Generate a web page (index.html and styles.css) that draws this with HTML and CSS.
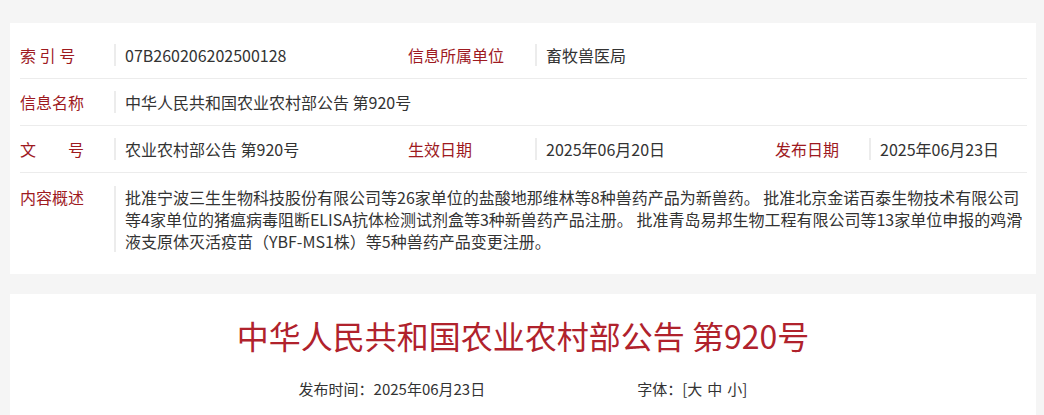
FILE: index.html
```html
<!DOCTYPE html>
<html lang="zh-CN">
<head>
    <meta charset="UTF-8">
    <meta name="viewport" content="width=device-width, initial-scale=1.0">
    <title>中华人民共和国农业农村部公告 第920号</title>
    <link rel="stylesheet" href="styles.css">
</head>
<body>
    <div class="info-card">
        <div class="info-row">
            <div class="label">索 引 号</div>
            <div class="value">07B260206202500128</div>
            <div class="label">信息所属单位</div>
            <div class="value span-rest">畜牧兽医局</div>
        </div>
        <div class="info-row">
            <div class="label">信息名称</div>
            <div class="value span-all">中华人民共和国农业农村部公告 第920号</div>
        </div>
        <div class="info-row">
            <div class="label">文　　号</div>
            <div class="value">农业农村部公告 第920号</div>
            <div class="label">生效日期</div>
            <div class="value">2025年06月20日</div>
            <div class="label">发布日期</div>
            <div class="value">2025年06月23日</div>
        </div>
        <div class="info-row summary">
            <div class="label">内容概述</div>
            <div class="value span-all">批准宁波三生生物科技股份有限公司等26家单位的盐酸地那维林等8种兽药产品为新兽药。 批准北京金诺百泰生物技术有限公司等4家单位的猪瘟病毒阻断ELISA抗体检测试剂盒等3种新兽药产品注册。 批准青岛易邦生物工程有限公司等13家单位申报的鸡滑液支原体灭活疫苗（YBF-MS1株）等5种兽药产品变更注册。</div>
        </div>
    </div>

    <div class="article-card">
        <h1 class="article-title">中华人民共和国农业农村部公告 第920号</h1>
        <div class="article-meta">
            <span>发布时间：2025年06月23日</span>
            <span class="font-size">字体：[<a href="#">大</a><a href="#">中</a><a href="#">小</a>]</span>
        </div>
    </div>
</body>
</html>
```

FILE: styles.css
```css
body {
    font-family: 'Noto Sans CJK SC', 'Noto Sans', sans-serif;
    background-color: #f5f5f5;
    color: #333333;
    margin: 0;
    padding: 23px 8px 0 10px;
}

.info-card {
    background-color: #ffffff;
    padding: 9px 9px 0 10px;
}

.info-row {
    display: grid;
    grid-template-columns: 94px 294px 127px 240px 94px 1fr;
    padding: 12px 0;
    border-bottom: 1px solid #ececec;
    font-size: 16px;
    line-height: 22px;
}

.info-row.summary {
    border-bottom: none;
    padding: 13px 0 22px;
}

.label {
    color: #9e1a1f;
    white-space: pre;
}

.value {
    border-left: 2px solid #ececec;
    padding-left: 9px;
    color: #333333;
}

.span-rest {
    grid-column: 4 / -1;
}

.span-all {
    grid-column: 2 / -1;
}

.article-card {
    background-color: #ffffff;
    margin-top: 20px;
    padding: 21px 10px 15px;
}

.article-title {
    margin: 0;
    text-align: center;
    font-size: 32px;
    line-height: 40px;
    font-weight: normal;
    color: #b0222c;
}

.article-meta {
    display: flex;
    justify-content: center;
    gap: 152px;
    margin-top: 23px;
    font-size: 15px;
    line-height: 22px;
    color: #333333;
}

.article-meta a {
    color: #333333;
    text-decoration: none;
}

.font-size a + a {
    margin-left: 5px;
}
```
